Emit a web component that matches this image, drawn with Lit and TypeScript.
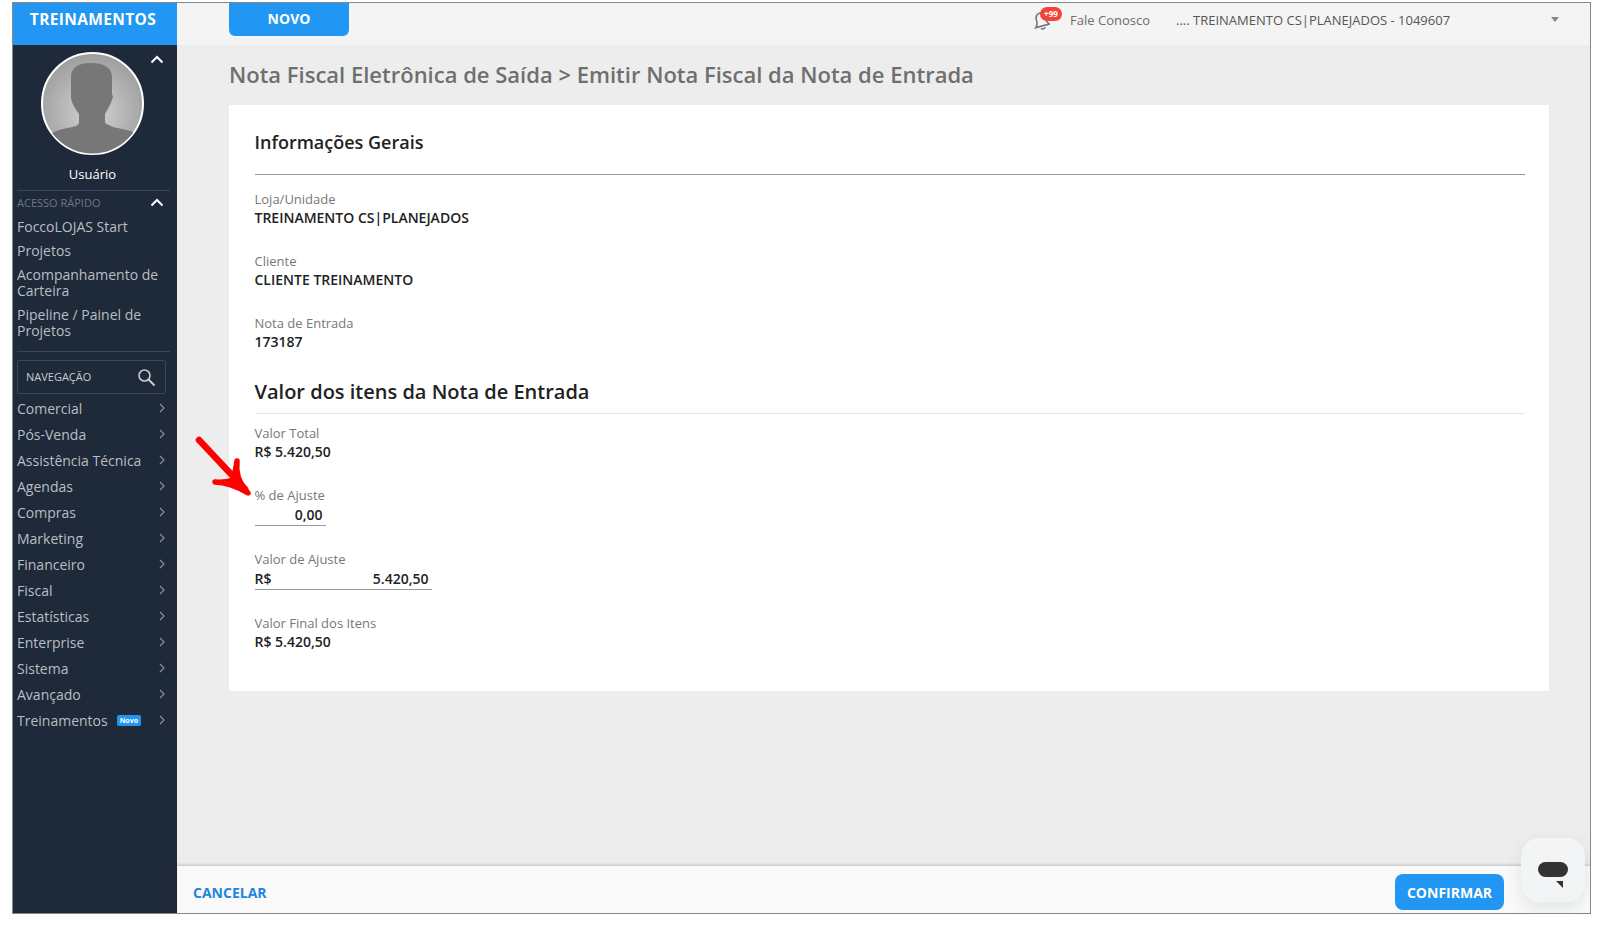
import { LitElement, css, html, svg } from "lit";
import { customElement } from "lit/decorators.js";

const NAV = [
  "Comercial",
  "Pós-Venda",
  "Assistência Técnica",
  "Agendas",
  "Compras",
  "Marketing",
  "Financeiro",
  "Fiscal",
  "Estatísticas",
  "Enterprise",
  "Sistema",
  "Avançado",
  "Treinamentos",
];

const chevronUp = svg`<svg class="up" width="14" height="9" viewBox="0 0 14 9"><path d="M1.5 7.5 7 2l5.5 5.5" fill="none" stroke="#fff" stroke-width="2"/></svg>`;

@customElement("app-root")
export class AppRoot extends LitElement {
  static styles = css`
    :host {
      display: block;
      background: #fff;
      padding: 2px 7px 15px 12px;
      font-family: "Open Sans", sans-serif;
      box-sizing: border-box;
      height: 929px;
    }
    .frame {
      position: relative;
      display: flex;
      height: 100%;
      box-sizing: border-box;
      border: 1px solid #888;
      overflow: hidden;
    }
    .side {
      width: 164px;
      flex: none;
      background: #1e2939;
      display: flex;
      flex-direction: column;
    }
    .brand {
      height: 42px;
      flex: none;
      background: #2196f3;
      color: #fff;
      font-size: 15.5px;
      font-weight: 700;
      line-height: 33px;
      text-align: center;
      letter-spacing: 0.35px;
      padding-right: 4px;
      box-sizing: border-box;
    }
    .profile {
      position: relative;
      display: flex;
      flex-direction: column;
      align-items: center;
      padding-top: 7px;
      margin-left: -5px;
    }
    .profile .up {
      position: absolute;
      top: 10px;
      right: 13px;
    }
    .avatar {
      width: 103px;
      height: 103px;
      display: block;
    }
    .user {
      color: #fff;
      font-size: 13px;
      line-height: 18px;
      margin-top: 10px;
    }
    .quick {
      margin: 7px 7px 0 4px;
      padding: 2px 0 12px;
      border-top: 1px solid #3a4656;
      border-bottom: 1px solid #3a4656;
    }
    .quick-head {
      display: flex;
      justify-content: space-between;
      align-items: center;
      height: 18px;
      color: #6d7783;
      font-size: 11px;
      padding-right: 6px;
    }
    .quick a {
      display: block;
      color: #b9bec4;
      font-size: 14px;
      line-height: 16px;
      margin-top: 8px;
    }
    .search {
      display: flex;
      justify-content: space-between;
      align-items: center;
      height: 32px;
      margin: 8px 11px 0 4px;
      padding: 0 9px 0 8px;
      border: 1px solid #3a4656;
      border-radius: 2px;
      color: #c9cdd2;
      font-size: 11px;
    }
    .search span {
      padding-bottom: 2px;
    }
    .nav {
      margin-top: 1px;
      padding: 0 11px 0 4px;
    }
    .nav-item {
      display: flex;
      align-items: center;
      height: 26px;
      color: #b9bec4;
      font-size: 14px;
    }
    .nav-item .grow {
      flex: 1;
    }
    .new {
      background: #2196f3;
      color: #fff;
      font-size: 7px;
      font-weight: 700;
      line-height: 11px;
      padding: 0 3px;
      border-radius: 2px;
      margin-right: 17px;
    }
    .main {
      flex: 1;
      min-width: 0;
      display: flex;
      flex-direction: column;
      background: #ededed;
    }
    .top {
      height: 42px;
      flex: none;
      display: flex;
      align-items: flex-start;
      background: #f4f4f4;
      padding-left: 52px;
      box-sizing: border-box;
    }
    .novo {
      width: 120px;
      height: 33px;
      background: #2196f3;
      color: #fff;
      font-size: 14px;
      font-weight: 700;
      line-height: 31px;
      text-align: center;
      border-radius: 0 0 6px 6px;
    }
    .top-right {
      margin-left: auto;
      display: flex;
      align-items: center;
      height: 33px;
      color: #6d6d6d;
      font-size: 13px;
    }
    .bell {
      position: relative;
      width: 38px;
      height: 26px;
    }
    .bell svg {
      display: block;
      margin-top: 3px;
    }
    .badge {
      position: absolute;
      left: 8px;
      top: 0;
      background: #f44336;
      color: #fff;
      font-size: 8px;
      font-weight: 700;
      line-height: 14px;
      height: 14px;
      padding: 0 4px;
      border-radius: 7px;
    }
    .unit {
      color: #555;
      margin-left: 26px;
      width: 375px;
      font-size: 13px;
    }
    .caret {
      width: 0;
      height: 0;
      border: 4px solid transparent;
      border-top: 5px solid #888;
      border-bottom: 0;
      margin-right: 31px;
    }
    .body {
      flex: 1;
      padding: 0 41px 0 52px;
      min-height: 0;
    }
    h1 {
      margin: 0;
      color: #6f6f6f;
      font-size: 22px;
      font-weight: 600;
      line-height: 30px;
      padding: 14px 0 16px;
    }
    .card {
      background: #fff;
      height: 586px;
      padding: 22px 24.5px 0 25.5px;
      box-sizing: border-box;
    }
    h2 {
      margin: 0;
      color: #222;
      font-weight: 600;
    }
    .h-general {
      font-size: 18px;
      line-height: 30px;
      padding-bottom: 17px;
      border-bottom: 1px solid #999;
      margin-bottom: 15px;
    }
    .h-values {
      font-size: 20px;
      line-height: 26px;
      padding-bottom: 8px;
      border-bottom: 1px solid #e6e6e6;
      margin: 3px 0 10px;
    }
    .field {
      height: 62px;
    }
    .field.tall {
      height: 64px;
    }
    .label {
      color: #777;
      font-size: 13px;
      line-height: 18px;
    }
    .value {
      color: #222;
      font-size: 14px;
      font-weight: 600;
      line-height: 19px;
    }
    .input {
      display: flex;
      justify-content: space-between;
      color: #222;
      font-size: 14px;
      font-weight: 600;
      line-height: 21px;
      padding: 0 3px 0 0;
      border-bottom: 1px solid #999;
      box-sizing: border-box;
    }
    .pct {
      width: 71px;
      justify-content: flex-end;
    }
    .amount {
      width: 177px;
    }
    .foot {
      height: 47px;
      flex: none;
      display: flex;
      align-items: center;
      justify-content: space-between;
      padding: 4px 86px 0 16px;
      box-sizing: border-box;
      background: #f9f9f9;
      box-shadow: 0 -1px 3px rgba(0, 0, 0, 0.2);
      position: relative;
    }
    .cancel {
      color: #1f86dc;
      font-size: 14px;
      font-weight: 700;
      padding-top: 2px;
    }
    .confirm {
      width: 109px;
      height: 36px;
      background: #2196f3;
      color: #fff;
      font-size: 14px;
      font-weight: 700;
      line-height: 38px;
      text-align: center;
      border-radius: 8px;
    }
    .chat {
      position: absolute;
      right: 5px;
      bottom: 11px;
      width: 64px;
      height: 64px;
      padding-top: 10px;
      box-sizing: border-box;
      background: #f3f4f5;
      border-radius: 18px;
      box-shadow: 0 6px 16px rgba(60, 90, 100, 0.12);
      display: flex;
      align-items: center;
      justify-content: center;
    }
    .arrow {
      position: absolute;
      left: 180px;
      top: 430px;
    }
  `;

  private chevron() {
    return svg`<svg width="8" height="12" viewBox="0 0 8 12"><path d="M2 2 6 6l-4 4" fill="none" stroke="#8d949c" stroke-width="1.1"/></svg>`;
  }

  private avatar() {
    return svg`<svg class="avatar" viewBox="0 0 103 103">
      <defs>
        <radialGradient id="bg" cx="50%" cy="58%" r="55%">
          <stop offset="0" stop-color="#d4d4d4"/>
          <stop offset="1" stop-color="#a0a0a0"/>
        </radialGradient>
        <clipPath id="round"><circle cx="51.5" cy="51.5" r="50"/></clipPath>
      </defs>
      <circle cx="51.5" cy="51.5" r="50.5" fill="url(#bg)" stroke="#fff" stroke-width="2"/>
      <path clip-path="url(#round)" fill="#777" d="M30 25C30 15 38 11 50 11c12 0 21 4 21 14v17l1 3c-2 7-6 13-8 17v8c0 2 4 3 8 5 8 2 16 3 20 5v25H11V81c7-4 17-5 24-7 3-1 3-3 3-4v-8c-3-4-7-10-8-16z"/>
    </svg>`;
  }

  render() {
    return html`
      <div class="frame">
        <aside class="side">
          <div class="brand">TREINAMENTOS</div>
          <div class="profile">
            ${this.avatar()} ${chevronUp}
            <div class="user">Usuário</div>
          </div>
          <div class="quick">
            <div class="quick-head"><span>ACESSO RÁPIDO</span>${chevronUp}</div>
            <a>FoccoLOJAS Start</a>
            <a>Projetos</a>
            <a>Acompanhamento de Carteira</a>
            <a>Pipeline / Painel de Projetos</a>
          </div>
          <div class="search">
            <span>NAVEGAÇÃO</span>
            <svg width="19" height="19" viewBox="0 0 19 19">
              <circle cx="7.5" cy="7.5" r="5.5" fill="none" stroke="#c9cdd2" stroke-width="1.6"/>
              <path d="m11.500 11.500 6 6" stroke="#c9cdd2" stroke-width="2"/>
            </svg>
          </div>
          <div class="nav">
            ${NAV.map(
              (n) => html`<div class="nav-item">
                <span>${n}</span><span class="grow"></span>
                ${n === "Treinamentos" ? html`<span class="new">Novo</span>` : ""}
                ${this.chevron()}
              </div>`
            )}
          </div>
        </aside>
        <div class="main">
          <header class="top">
            <div class="novo">NOVO</div>
            <div class="top-right">
              <div class="bell">
                <svg width="18" height="21" viewBox="0 0 18 21">
                  <g transform="rotate(-15 9 10)" fill="none" stroke="#777" stroke-width="1.6">
                    <path d="M9 3C5 3 4.500 7 4.500 10c0 3-1.500 5-2.500 6h14c-1-1-2.500-3-2.500-6 0-3-.5-7-4.500-7z"/>
                    <path d="M7 18c.5 1.500 3.500 1.500 4 0"/>
                  </g>
                </svg>
                <span class="badge">+99</span>
              </div>
              <span>Fale Conosco</span>
              <span class="unit">.... TREINAMENTO CS|PLANEJADOS - 1049607</span>
              <span class="caret"></span>
            </div>
          </header>
          <div class="body">
            <h1>Nota Fiscal Eletrônica de Saída &gt; Emitir Nota Fiscal da Nota de Entrada</h1>
            <section class="card">
              <h2 class="h-general">Informações Gerais</h2>
              <div class="field">
                <div class="label">Loja/Unidade</div>
                <div class="value">TREINAMENTO CS|PLANEJADOS</div>
              </div>
              <div class="field">
                <div class="label">Cliente</div>
                <div class="value">CLIENTE TREINAMENTO</div>
              </div>
              <div class="field">
                <div class="label">Nota de Entrada</div>
                <div class="value">173187</div>
              </div>
              <h2 class="h-values">Valor dos itens da Nota de Entrada</h2>
              <div class="field">
                <div class="label">Valor Total</div>
                <div class="value">R$ 5.420,50</div>
              </div>
              <div class="field tall">
                <div class="label">% de Ajuste</div>
                <div class="input pct"><span>0,00</span></div>
              </div>
              <div class="field tall">
                <div class="label">Valor de Ajuste</div>
                <div class="input amount"><span>R$</span><span>5.420,50</span></div>
              </div>
              <div class="field">
                <div class="label">Valor Final dos Itens</div>
                <div class="value">R$ 5.420,50</div>
              </div>
            </section>
          </div>
          <footer class="foot">
            <span class="cancel">CANCELAR</span>
            <span class="confirm">CONFIRMAR</span>
          </footer>
        </div>
        <svg class="arrow" width="70" height="70" viewBox="0 0 70 70">
          <path d="M6 7 52 56" fill="none" stroke="#f00" stroke-width="6.5" stroke-linecap="round"/>
          <path d="M44 28c-1 10 0 20 11 32-10-6-21-11-33-11 9 1 15-1 18-2 2-6 3-12 4-19z" fill="#f00" stroke="#f00" stroke-width="5.5" stroke-linejoin="round"/>
        </svg>
        <div class="chat">
          <svg width="32" height="26" viewBox="0 0 32 26">
            <rect x="1" y="0" width="30" height="15" rx="7.500" fill="#333"/>
            <path d="M19 19h7v7z" fill="#333"/>
          </svg>
        </div>
      </div>
    `;
  }
}
